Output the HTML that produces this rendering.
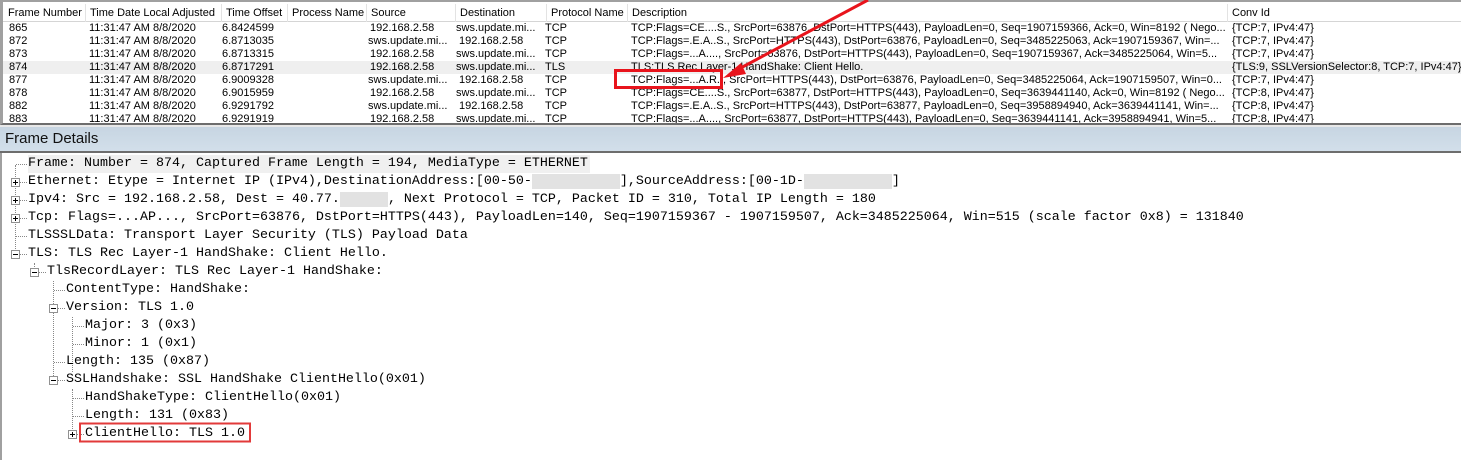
<!DOCTYPE html>
<html><head><meta charset="utf-8"><style>
*{margin:0;padding:0;box-sizing:border-box}
body{width:1461px;height:460px;background:#fff;position:relative;overflow:hidden;font-family:"Liberation Sans",sans-serif;}
.top{position:absolute;left:0;top:0;width:1461px;height:125px;border-top:2px solid #a0a0a0;border-left:3px solid #a0a0a0;border-bottom:2px solid #6d6d6d;overflow:hidden}
.hdr{position:absolute;top:2px;left:0;height:18px;width:1461px;background:#fff;border-bottom:1px solid #d5d5d5}
.hc{position:absolute;top:0;height:18px;font-size:11px;line-height:18px;color:#000;padding-left:4px;border-right:1px solid #e3e3e3;white-space:nowrap;overflow:hidden}
.row{position:absolute;left:0;width:1461px;height:13px;font-size:11px;line-height:13px;white-space:nowrap}
.row span{position:absolute;top:0;overflow:hidden}
.sel{background:#efefef}
.fd{position:absolute;left:0;top:125px;width:1461px;height:28px;background:linear-gradient(#c7d5e2,#d2dfea);border-top:2px solid #e8e8e8;border-bottom:2px solid #6d6d6d;font-size:15px;line-height:24px;padding-left:5px;color:#111}
.det{position:absolute;left:0;top:153px;width:1461px;height:307px;border-left:2px solid #a0a0a0}
.t{position:absolute;font-family:"Liberation Mono",monospace;font-size:13.33px;line-height:18px;height:18px;white-space:pre;color:#000}
.bl{background:#e2e2e2}
.box{position:absolute;width:9px;height:9px;border:1px solid #919191;background:#fff}
.box:before{content:"";position:absolute;left:1px;top:3px;width:5px;height:1px;background:#000}
.box.p:after{content:"";position:absolute;left:3px;top:1px;width:1px;height:5px;background:#000}
.vl{position:absolute;width:0;border-left:1px dotted #888}
.hl{position:absolute;height:0;border-top:1px dotted #888}
</style></head><body>
<div class="top">
<div class="hdr">
<div class="hc" style="left:0;width:83px;padding-left:5px">Frame Number</div>
<div class="hc" style="left:83px;width:136px">Time Date Local Adjusted</div>
<div class="hc" style="left:219px;width:66px">Time Offset</div>
<div class="hc" style="left:285px;width:79px">Process Name</div>
<div class="hc" style="left:364px;width:89px">Source</div>
<div class="hc" style="left:453px;width:91px">Destination</div>
<div class="hc" style="left:544px;width:81px">Protocol Name</div>
<div class="hc" style="left:625px;width:600px">Description</div>
<div class="hc" style="left:1225px;width:240px">Conv Id</div>
</div>
</div>
<div id="rows"></div>
<div class="fd">Frame Details</div>
<div class="det"></div>
<div id="tree"></div>
<svg style="position:absolute;left:0;top:0" width="1461" height="460">
<rect x="615.5" y="70.5" width="106" height="17" fill="none" stroke="#e8141c" stroke-width="3"/>
<line x1="868" y1="0" x2="735" y2="71" stroke="#e8141c" stroke-width="3"/>
<polygon points="723,78 741,63 746,74" fill="#e8141c"/>
<rect x="80" y="423.5" width="170" height="18" fill="none" stroke="#e23a3a" stroke-width="2"/>
</svg>
<script>
var R=[["865","6.8424599","192.168.2.58","sws.update.mi...","TCP","TCP:Flags=CE....S., SrcPort=63876, DstPort=HTTPS(443), PayloadLen=0, Seq=1907159366, Ack=0, Win=8192 ( Nego...","{TCP:7, IPv4:47}"],
["872","6.8713035","sws.update.mi...","192.168.2.58","TCP","TCP:Flags=.E.A..S., SrcPort=HTTPS(443), DstPort=63876, PayloadLen=0, Seq=3485225063, Ack=1907159367, Win=...","{TCP:7, IPv4:47}"],
["873","6.8713315","192.168.2.58","sws.update.mi...","TCP","TCP:Flags=...A...., SrcPort=63876, DstPort=HTTPS(443), PayloadLen=0, Seq=1907159367, Ack=3485225064, Win=5...","{TCP:7, IPv4:47}"],
["874","6.8717291","192.168.2.58","sws.update.mi...","TLS","TLS:TLS Rec Layer-1 HandShake: Client Hello.","{TLS:9, SSLVersionSelector:8, TCP:7, IPv4:47}"],
["877","6.9009328","sws.update.mi...","192.168.2.58","TCP","TCP:Flags=...A.R.., SrcPort=HTTPS(443), DstPort=63876, PayloadLen=0, Seq=3485225064, Ack=1907159507, Win=0...","{TCP:7, IPv4:47}"],
["878","6.9015959","192.168.2.58","sws.update.mi...","TCP","TCP:Flags=CE....S., SrcPort=63877, DstPort=HTTPS(443), PayloadLen=0, Seq=3639441140, Ack=0, Win=8192 ( Nego...","{TCP:8, IPv4:47}"],
["882","6.9291792","sws.update.mi...","192.168.2.58","TCP","TCP:Flags=.E.A..S., SrcPort=HTTPS(443), DstPort=63877, PayloadLen=0, Seq=3958894940, Ack=3639441141, Win=...","{TCP:8, IPv4:47}"],
["883","6.9291919","192.168.2.58","sws.update.mi...","TCP","TCP:Flags=...A...., SrcPort=63877, DstPort=HTTPS(443), PayloadLen=0, Seq=3639441141, Ack=3958894941, Win=5...","{TCP:8, IPv4:47}"]];
var h="";
R.forEach(function(r,i){var y=22+i*13;
h+='<div class="row'+(i==3?' sel':'')+'" style="top:'+y+'px;left:3px;width:1458px'+(i==7?';height:10px;overflow:hidden':'')+'">'+
'<span style="left:6px">'+r[0]+'</span><span style="left:86px">11:31:47 AM 8/8/2020</span><span style="left:219px">'+r[1]+'</span>'+
'<span style="left:'+(r[2][0]=='s'?365:367)+'px">'+r[2]+'</span><span style="left:'+(r[3][0]=='s'?453:456)+'px">'+r[3]+'</span><span style="left:542px">'+r[4]+'</span>'+
'<span style="left:628px;width:596px">'+r[5]+'</span><span style="left:1229px">'+r[6]+'</span></div>';});
document.getElementById('rows').innerHTML=h;
var L=[[0,0,'Frame: Number = 874, Captured Frame Length = 194, MediaType = ETHERNET'],
[0,'p','Ethernet: Etype = Internet IP (IPv4),DestinationAddress:[00-50-<b class="bl">           </b>],SourceAddress:[00-1D-<b class="bl">           </b>]'],
[0,'p','Ipv4: Src = 192.168.2.58, Dest = 40.77.<b class="bl">      </b>, Next Protocol = TCP, Packet ID = 310, Total IP Length = 180'],
[0,'p','Tcp: Flags=...AP..., SrcPort=63876, DstPort=HTTPS(443), PayloadLen=140, Seq=1907159367 - 1907159507, Ack=3485225064, Win=515 (scale factor 0x8) = 131840'],
[0,0,'TLSSSLData: Transport Layer Security (TLS) Payload Data'],
[0,'m','TLS: TLS Rec Layer-1 HandShake: Client Hello.'],
[1,'m','TlsRecordLayer: TLS Rec Layer-1 HandShake:'],
[2,0,'ContentType: HandShake:'],
[2,'m','Version: TLS 1.0'],
[3,0,'Major: 3 (0x3)'],
[3,0,'Minor: 1 (0x1)'],
[2,0,'Length: 135 (0x87)'],
[2,'m','SSLHandshake: SSL HandShake ClientHello(0x01)'],
[3,0,'HandShakeType: ClientHello(0x01)'],
[3,0,'Length: 131 (0x83)'],
[3,'p','ClientHello: TLS 1.0']];
h='';
var B=155;
h+='<div class="vl" style="left:15px;top:'+(B+10)+'px;height:90px"></div>';
h+='<div class="vl" style="left:34px;top:'+(B+108)+'px;height:10px"></div>';
h+='<div class="vl" style="left:53px;top:'+(B+126)+'px;height:99px"></div>';
h+='<div class="vl" style="left:72px;top:'+(B+162)+'px;height:55px"></div>';
h+='<div class="vl" style="left:72px;top:'+(B+234)+'px;height:46px"></div>';
L.forEach(function(l,i){var y=B+i*18;var cx=15+l[0]*19;var tx=28+l[0]*19;
h+='<div class="hl" style="left:'+(cx+1)+'px;top:'+(y+9)+'px;width:'+(tx-cx-2)+'px"></div>';
if(l[1])h+='<div class="box '+(l[1]=='p'?'p':'')+'" style="left:'+(cx-4)+'px;top:'+(y+5)+'px"></div>';
h+='<div class="t" style="left:'+tx+'px;top:'+y+'px'+(i==0?';background:#f0f0f0;padding-right:2px':'')+'">'+l[2]+'</div>';});
document.getElementById('tree').innerHTML=h;
</script>
</body></html>
